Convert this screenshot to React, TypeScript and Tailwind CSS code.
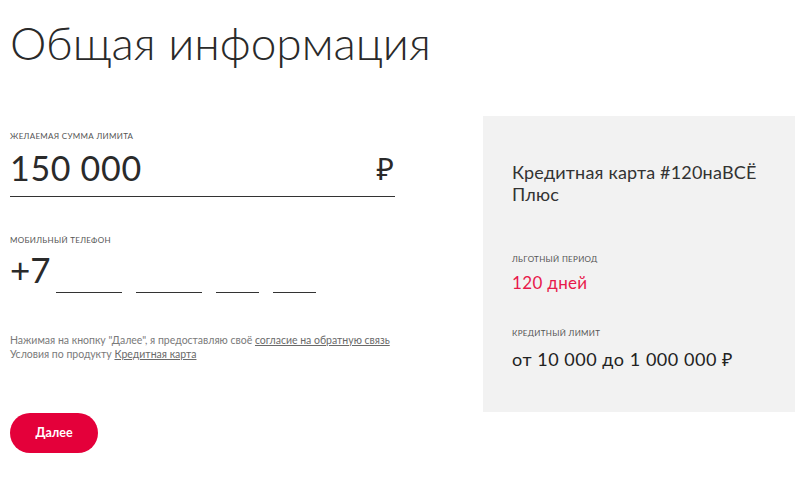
import React from "react";

const font = { fontFamily: 'Lato, "Noto Sans", sans-serif' };

function Label({ children }: { children: React.ReactNode }) {
  return (
    <div className="text-[8px] uppercase tracking-[0.04em] text-[#555] leading-none">
      {children}
    </div>
  );
}

export default function App() {
  return (
    <div className="w-[800px] h-[500px] bg-white overflow-hidden text-[#222]" style={font}>
      <h1 className="pl-[10px] pt-[13px] text-[46px] leading-[60px] font-light text-[#2a2a2a]">
        Общая информация
      </h1>

      <div className="flex mt-[43px]">
        {/* form */}
        <div className="pl-[10px] w-[395px] shrink-0 flex flex-col">
          <div className="pt-[16px]">
            <Label>Желаемая сумма лимита</Label>
            <div className="flex items-end justify-between border-b-[1.5px] border-[#333] pb-[10px] mt-[10px] w-[385px]">
              <span className="text-[34px] leading-[36px] tracking-[0.02em] text-[#2a2a2a]">150 000</span>
              <span className="text-[30px] leading-[36px] text-[#2a2a2a] pr-[1px]">₽</span>
            </div>
          </div>

          <div className="mt-[39px]">
            <Label>Мобильный телефон</Label>
            <div className="flex items-end mt-[9px] h-[32px]">
              <span className="text-[35px] leading-[32px] text-[#2a2a2a] w-[46px]">+7</span>
              <div className="flex items-end gap-[14px] mb-[-8px]">
                <span className="block w-[66px] border-b-[1.5px] border-[#333]" />
                <span className="block w-[66px] border-b-[1.5px] border-[#333]" />
                <span className="block w-[43px] border-b-[1.5px] border-[#333]" />
                <span className="block w-[43px] border-b-[1.5px] border-[#333]" />
              </div>
            </div>
          </div>

          <div className="mt-[48px] text-[10.5px] leading-[14px] text-[#7a7a7a] whitespace-nowrap">
            <div>
              Нажимая на кнопку "Далее", я предоставляю своё{" "}
              <a className="underline text-[#6a6a6a]">согласие на обратную связь</a>
            </div>
            <div>
              Условия по продукту <a className="underline text-[#6a6a6a]">Кредитная карта</a>
            </div>
          </div>

          <button className="mt-[52px] w-[88px] h-[40px] rounded-full bg-[#e4003a] text-white text-[12.5px] font-bold">
            Далее
          </button>
        </div>

        {/* info panel */}
        <div className="ml-[88px] w-[312px] h-[296px] bg-[#f2f2f2] pl-[29px] pt-[45px]">
          <div className="text-[18px] leading-[22px] tracking-[0.01em] text-[#333]">
            Кредитная карта #120наВСЁ
            <br />
            Плюс
          </div>
          <div className="mt-[50px]">
            <Label>Льготный период</Label>
            <div className="mt-[10px] text-[17px] leading-[20px] tracking-[0.02em] text-[#e8194b]">120 дней</div>
          </div>
          <div className="mt-[36px]">
            <Label>Кредитный лимит</Label>
            <div className="mt-[12px] text-[18px] leading-[20px] tracking-[0.03em] text-[#222]">
              от 10 000 до 1 000 000 ₽
            </div>
          </div>
        </div>
      </div>
    </div>
  );
}
